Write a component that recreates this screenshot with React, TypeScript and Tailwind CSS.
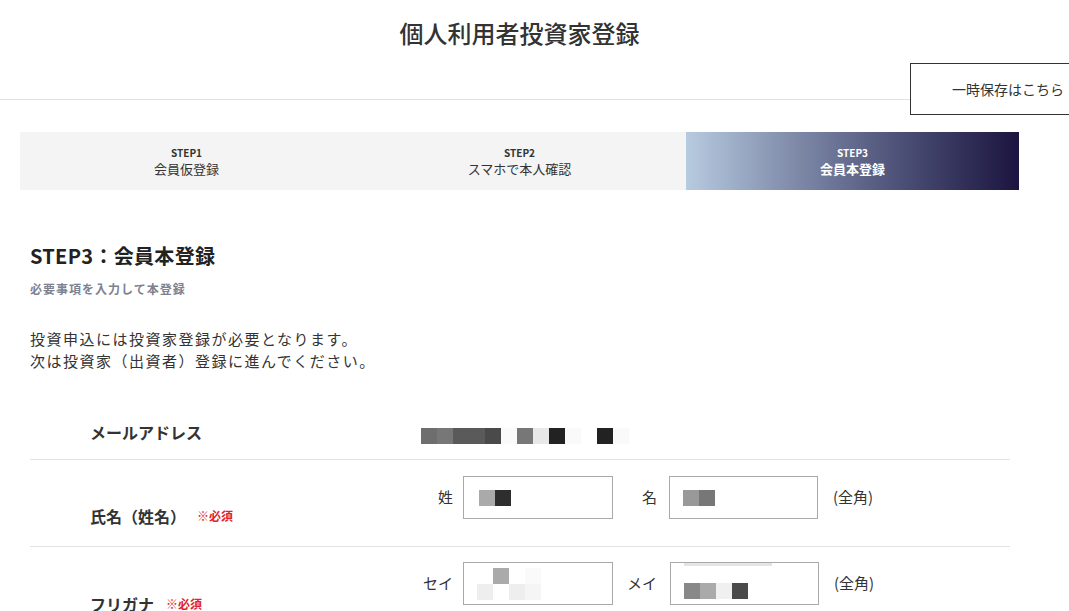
import React from 'react';

const Blocks: React.FC<{ colors: string[] }> = ({ colors }) => (
  <div className="flex">
    {colors.map((c, i) => (
      <div key={i} className="w-[16px] h-[16px]" style={{ backgroundColor: c }} />
    ))}
  </div>
);

const steps = [
  { no: 'STEP1', label: '会員仮登録', active: false },
  { no: 'STEP2', label: 'スマホで本人確認', active: false },
  { no: 'STEP3', label: '会員本登録', active: true },
];

const App: React.FC = () => {
  return (
    <div className="min-h-screen w-full overflow-hidden bg-white text-[#333] font-['Noto_Sans_CJK_JP',sans-serif]">
      {/* header */}
      <div className="relative h-[100px] border-b border-[#e2e2e2]">
        <div className="w-[1039px] pt-[15px] text-center text-[24px] leading-[36px] font-medium text-[#333]">
          個人利用者投資家登録
        </div>
        <button className="absolute left-[910px] top-[63px] w-[200px] h-[52px] border border-[#333] bg-white flex items-center pl-[41px] text-[14px] text-[#333]">
          一時保存はこちら
        </button>
      </div>

      {/* steps */}
      <div className="ml-[20px] mt-[32px] w-[999px] h-[58px] grid grid-cols-3 bg-[#f4f4f4]">
        {steps.map((s) => (
          <div
            key={s.no}
            className={`flex flex-col items-center justify-center ${
              s.active ? 'bg-gradient-to-r from-[#b7cbe0] to-[#1c1440] text-white font-bold' : 'text-[#333]'
            }`}
          >
            <span className="text-[10px] leading-[14px] font-semibold">{s.no}</span>
            <span className="text-[13px] leading-[17px]">{s.label}</span>
          </div>
        ))}
      </div>

      {/* body */}
      <div className="ml-[30px] w-[980px]">
        <h2 className="mt-[51px] text-[20px] leading-[30px] font-bold tracking-[0.3px] text-[#222]">STEP3：会員本登録</h2>
        <p className="mt-[10px] text-[12px] leading-[16px] font-bold tracking-[1px] text-[#7d8291]">必要事項を入力して本登録</p>
        <p className="mt-[31px] text-[15px] leading-[22px] tracking-[1.5px] text-[#333]">
          投資申込には投資家登録が必要となります。
          <br />
          次は投資家（出資者）登録に進んでください。
        </p>

        {/* row: email */}
        <div className="flex h-[88px] border-b border-[#e3e3e3]">
          <div className="w-[390px] pl-[60px] pt-[48px] text-[16px] leading-[24px] font-bold text-[#333]">
            メールアドレス
          </div>
          <div className="pt-[56px] pl-[1px]">
            <Blocks
              colors={[
                '#6e6e6e', '#777777', '#5a5a5a', '#5a5a5a', '#4a4a4a', '#fafafa', '#777777',
                '#e8e8e8', '#222222', '#fafafa', '#ffffff', '#222222', '#fafafa',
              ]}
            />
          </div>
        </div>

        {/* row: name */}
        <div className="flex h-[87px] border-b border-[#e3e3e3]">
          <div className="w-[390px] pl-[60px] pt-[44px] flex items-center h-fit text-[16px] leading-[24px] font-bold text-[#333]">
            氏名（姓名）
            <span className="ml-[11px] text-[12px] font-bold text-[#e2222b]">※必須</span>
          </div>
          <div className="pt-[16px] flex items-start">
            <div className="flex items-center text-[15px]">
              <span className="w-[33px] text-right mr-[10px]">姓</span>
              <div className="w-[150px] h-[43px] border border-[#a9a9a9] flex items-center pl-[15px]">
                <Blocks colors={['#aaaaaa', '#2e2e2e']} />
              </div>
              <span className="w-[44px] text-right mr-[12px]">名</span>
              <div className="w-[149px] h-[43px] border border-[#a9a9a9] flex items-center pl-[13px]">
                <Blocks colors={['#999999', '#777777']} />
              </div>
              <span className="ml-[15px]">(全角)</span>
            </div>
          </div>
        </div>

        {/* row: kana */}
        <div className="flex h-[87px] border-b border-[#e3e3e3]">
          <div className="w-[390px] pl-[60px] pt-[45px] flex items-center h-fit text-[16px] leading-[24px] font-bold text-[#333]">
            フリガナ
            <span className="ml-[12px] text-[12px] font-bold text-[#e2222b]">※必須</span>
          </div>
          <div className="pt-[15px] flex items-start">
            <div className="flex items-center text-[15px]">
              <span className="w-[33px] text-right mr-[10px]">セイ</span>
              <div className="w-[150px] h-[43px] border border-[#a9a9a9] flex flex-col justify-center pl-[13px]">
                <Blocks colors={['#ffffff', '#aaaaaa', '#ffffff', '#fafafa']} />
                <Blocks colors={['#eeeeee', '#ffffff', '#eeeeee', '#f5f5f5']} />
              </div>
              <span className="w-[44px] text-right mr-[13px]">メイ</span>
              <div className="w-[149px] h-[43px] border border-[#a9a9a9] flex flex-col pl-[13px]">
                <div className="w-[88px] h-[3px] bg-[#e4e4e4]" />
                <div className="mt-[17px]">
                  <Blocks colors={['#888888', '#aaaaaa', '#f0f0f0', '#4a4a4a']} />
                </div>
              </div>
              <span className="ml-[15px]">(全角)</span>
            </div>
          </div>
        </div>
      </div>
    </div>
  );
};

export default App;
